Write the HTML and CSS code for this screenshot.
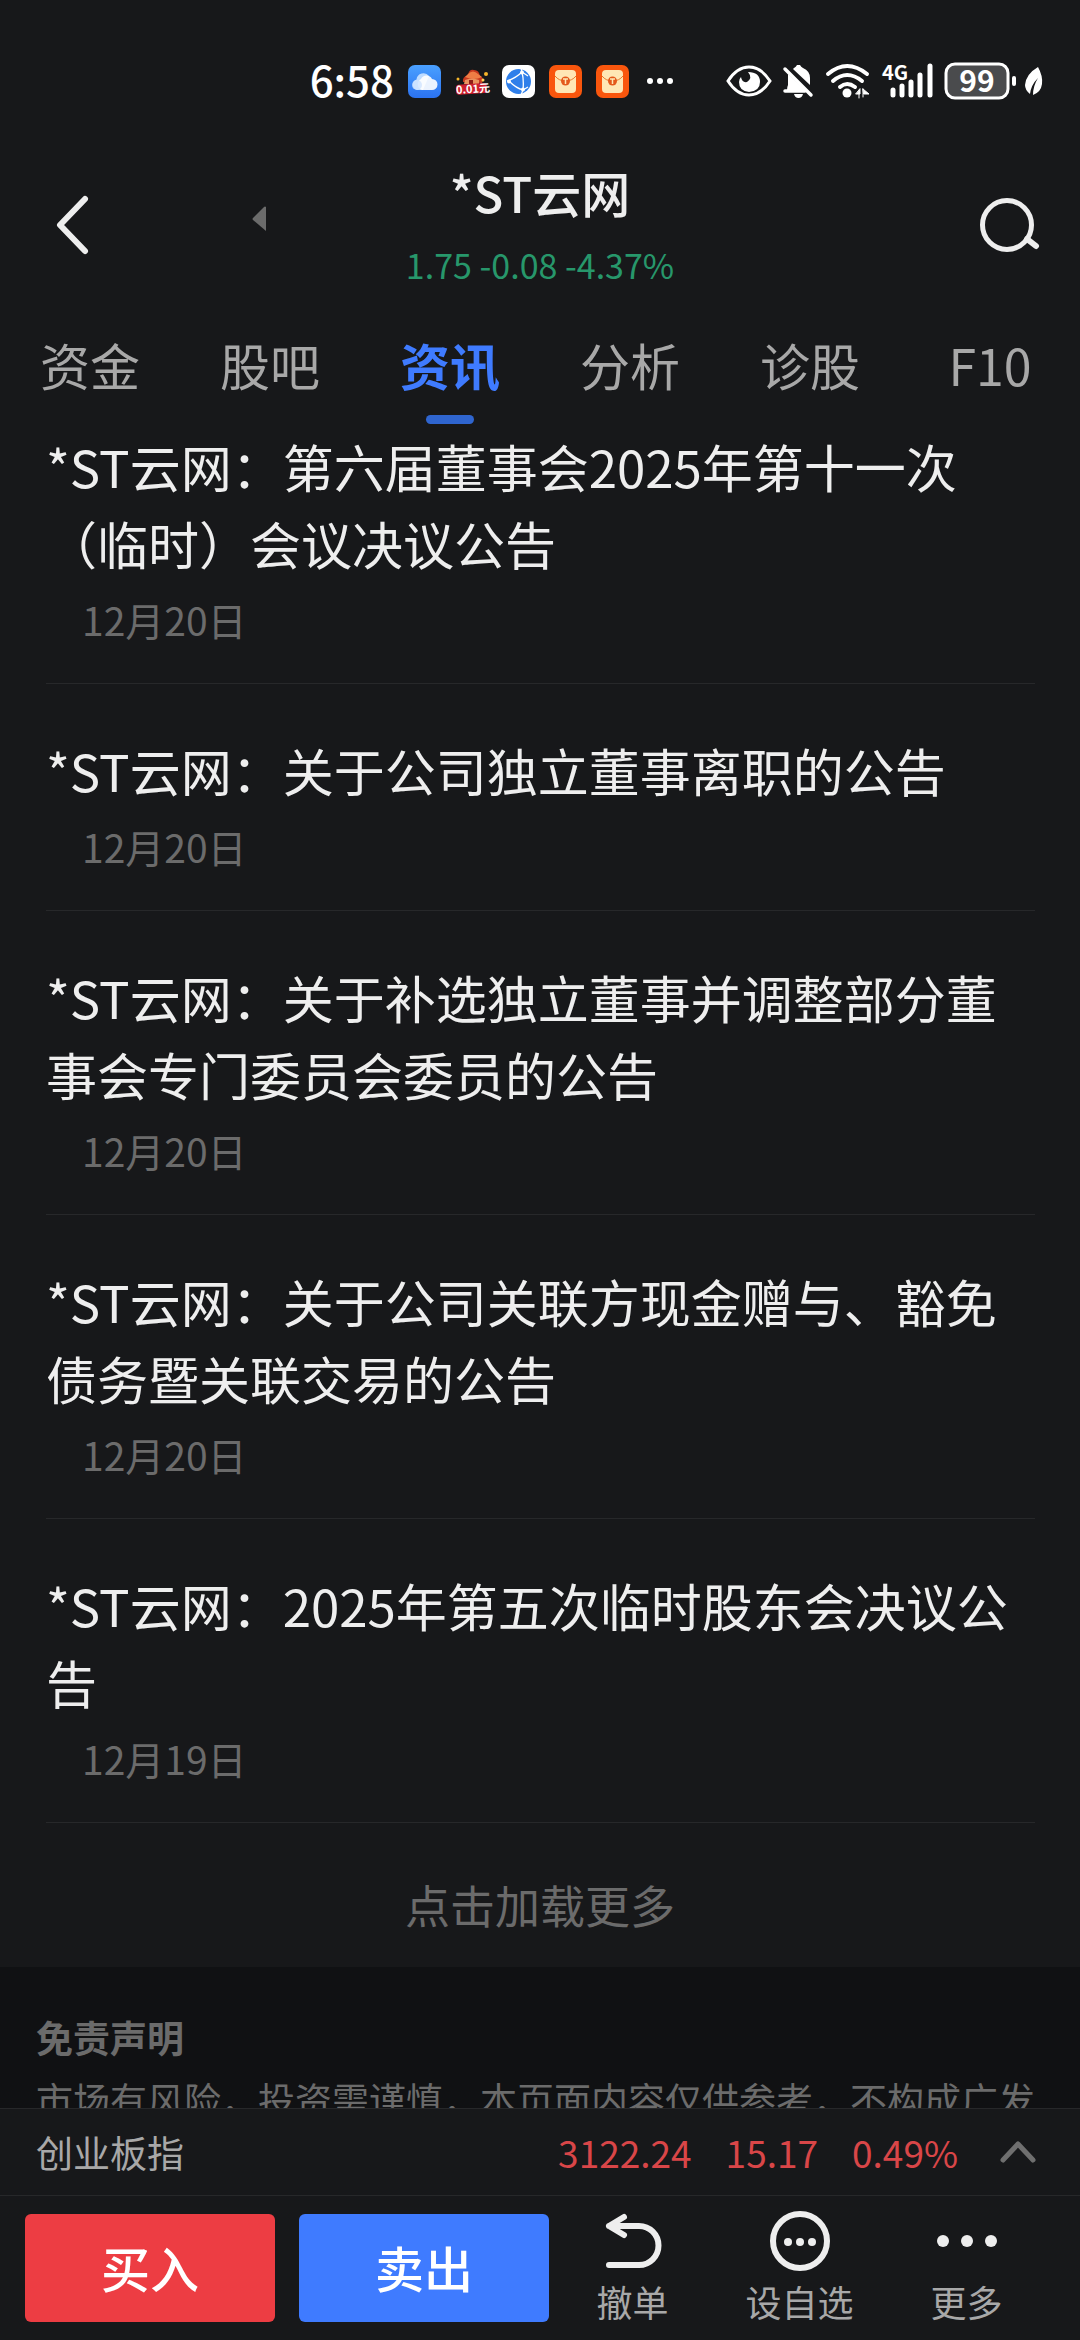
FILE: index.html
```html
<!DOCTYPE html>
<html lang="zh-CN">
<head>
<meta charset="utf-8">
<meta name="viewport" content="width=device-width, initial-scale=1">
<title>*ST云网 资讯</title>
<link rel="stylesheet" href="styles.css">
</head>
<body>
<div class="status">
  <div class="status-group">
    <span class="clock">6:58</span>
    <svg width="33" height="33" viewBox="0 0 33 33"><defs><linearGradient id="sky" x2="0" y2="1"><stop stop-color="#4aa0ff"/><stop offset="1" stop-color="#2b72f0"/></linearGradient></defs><rect width="33" height="33" rx="7" fill="url(#sky)"/><path d="M9 25a5.500 5.500 0 0 1-.5-10.500A7 7 0 0 1 21 11l-6 14z" fill="#bfdcff"/><path d="M14 25a6 6 0 0 1-1-11 6 6 0 0 1 11 0 5.500 5.500 0 0 1 0 11z" fill="#fff" opacity=".9"/><circle cx="9" cy="20" r="5" fill="#cfe4ff" opacity=".8"/></svg>
    <svg width="33" height="33" viewBox="0 0 33 33"><path d="M8 17q-1-5 5-7 1-6 6-5 5 0 6 6 5 2 2 7z" fill="#c8391f"/><path d="M13 9q5-5 10 0l4 3q-8 4-17 0z" fill="#ef7d45"/><path d="M10 15q7-3 14 0v4H9z" fill="#e9925f"/><path d="M14 15h4v4h-4z" fill="#8f1d16"/><circle cx="3" cy="14" r="1.500" fill="#f5b52a"/><circle cx="31" cy="9" r="2" fill="#f5b52a"/><circle cx="28" cy="15" r="1.500" fill="#ffd45c"/><rect x="1" y="19" width="31" height="10" rx="3" fill="#ce1f2e" transform="rotate(-4 16 24)"/><text x="1" y="28" font-size="11" font-weight="700" fill="#fff" transform="rotate(-4 16 24)">0.01元</text></svg>
    <svg width="33" height="33" viewBox="0 0 33 33"><rect width="33" height="33" rx="7" fill="#fff"/><circle cx="16.500" cy="16.500" r="12.500" fill="#2f7fea"/><path d="M5 16Q14 13 20 7q2 8 1 18Q14 23 8 17m12-10 6 4M21 25l5-3M20 7l-1-4M21 25l-2 5" fill="none" stroke="#fff" stroke-width="1.300"/><circle cx="7" cy="16.500" r="2" fill="#fff"/><circle cx="20" cy="7.500" r="2" fill="#fff"/><circle cx="21" cy="24.500" r="2" fill="#fff"/></svg>
    <svg width="33" height="33" viewBox="0 0 33 33"><rect width="33" height="33" rx="7" fill="#f9560d"/><rect x="6" y="5" width="21" height="23" rx="4" fill="#ffe7b5"/><path d="M6 11q4 5 10.500 5T27 11" fill="none" stroke="#e8792c"/><circle cx="16.500" cy="16" r="4.500" fill="#e4591b"/><path d="M14 14h5m-2.500 0v5" stroke="#ffe7b5" stroke-width="1.500"/></svg>
    <svg width="33" height="33" viewBox="0 0 33 33"><rect width="33" height="33" rx="7" fill="#f9560d"/><rect x="6" y="5" width="21" height="23" rx="4" fill="#ffe7b5"/><path d="M6 11q4 5 10.500 5T27 11" fill="none" stroke="#e8792c"/><circle cx="16.500" cy="16" r="4.500" fill="#e4591b"/><path d="M14 14h5m-2.500 0v5" stroke="#ffe7b5" stroke-width="1.500"/></svg>
    <svg width="33" height="33" viewBox="0 0 33 33" fill="#fff"><circle cx="7" cy="16" r="3"/><circle cx="17" cy="16" r="3"/><circle cx="27" cy="16" r="3"/></svg>
  </div>
  <div class="status-group status-system">
    <svg width="46" height="36" viewBox="0 0 46 36"><path d="M2 18Q11 4 23 4t21 14Q35 32 23 32T2 18z" fill="none" stroke="#fff" stroke-width="3"/><path d="M22 9q12 0 12 10 0 9-11 10-10-1-10-10 0-3 2-5 1 6 6 5 6-4 1-10z" fill="#fff"/></svg>
    <svg width="31" height="36" viewBox="0 0 31 36"><path d="M4 27q0-3 1-5V11L22 27zM11 5q2-1 3-3h3q1 2 3 3 7 3 7 10v7L10 6zM11 31h9q-1 4-4.500 4T11 31z" fill="#fff"/><path d="M2 6 28 32M2 28h20" stroke="#fff" stroke-width="3.500" stroke-linecap="round"/></svg>
    <svg width="46" height="36" viewBox="0 0 46 36" fill="none" stroke="#fff" stroke-width="4" stroke-linecap="round"><path d="M3 11Q22-5 42 11M8 18Q22 6 37 18M15 24q7-6 15 0"/><circle cx="22" cy="30" r="4.500" fill="#fff" stroke="none"/><path d="M31 31h4v-5zm3 0v4m4-9v8m0-8 6 5h-5z" fill="#fff" stroke-width="1"/></svg>
    <svg width="51" height="36" viewBox="0 0 51 36"><text class="network" x="0" y="17">4G</text><path d="M11 27v5M20 23v9M29 19v13M38 12v20M48 3v29" stroke="#fff" stroke-width="5" stroke-linecap="round"/></svg>
    <svg width="73" height="38" viewBox="0 0 73 38"><rect x="2" y="2" width="62" height="34" rx="9" fill="#4a4b4d" stroke="#fff" stroke-width="3"/><text class="battery" x="33" y="30" text-anchor="middle">99</text><rect x="68" y="14" width="4" height="10" rx="2" fill="#fff"/></svg>
    <svg class="leaf" width="18" height="30" viewBox="0 0 18 30"><path d="M13 1q5 9 4 17-1 8-9 11 0-9 5-17Q6 19 5 28q-5-4-5-9Q1 8 13 1z" fill="#fff"/></svg>
  </div>
</div>

<header class="header">
  <div class="header-left">
    <button class="icon-button back" aria-label="返回"><svg width="34" height="60" viewBox="0 0 34 60"><path d="M29 4 4 30l25 26" fill="none" stroke="#eee" stroke-width="6" stroke-linecap="round" stroke-linejoin="round"/></svg></button>
    <button class="icon-button" aria-label="上一只"><svg width="16" height="38" viewBox="0 0 16 38"><path d="M14 1v24L1 14q-1-1 0-2L12 1q1-1 2 0z" fill="#6b6b6b"/></svg></button>
  </div>
  <div class="stock">
    <h1 class="stock-name">*ST云网</h1>
    <p class="stock-quote">1.75 -0.08 -4.37%</p>
  </div>
  <button class="icon-button search" aria-label="搜索"><svg width="62" height="56" viewBox="0 0 62 56" fill="none" stroke="#eee" stroke-width="5"><circle cx="29" cy="28" r="24.500"/><path d="m49 42 9 7" stroke-width="6" stroke-linecap="round"/></svg></button>
</header>

<nav class="tabs">
  <a class="tab" href="#fund">资金</a>
  <a class="tab" href="#forum">股吧</a>
  <a class="tab tab-active" href="#news" aria-current="page">资讯</a>
  <a class="tab" href="#analysis">分析</a>
  <a class="tab" href="#diagnosis">诊股</a>
  <a class="tab" href="#f10">F10</a>
</nav>

<main class="content" id="news">
  <ul class="news">
    <li class="news-item"><a class="news-title" href="#n1">*ST云网：第六届董事会2025年第十一次（临时）会议决议公告</a><time class="news-date">12月20日</time></li>
    <li class="news-item"><a class="news-title" href="#n2">*ST云网：关于公司独立董事离职的公告</a><time class="news-date">12月20日</time></li>
    <li class="news-item"><a class="news-title" href="#n3">*ST云网：关于补选独立董事并调整部分董事会专门委员会委员的公告</a><time class="news-date">12月20日</time></li>
    <li class="news-item"><a class="news-title" href="#n4">*ST云网：关于公司关联方现金赠与、豁免债务暨关联交易的公告</a><time class="news-date">12月20日</time></li>
    <li class="news-item"><a class="news-title" href="#n5">*ST云网：2025年第五次临时股东会决议公告</a><time class="news-date">12月19日</time></li>
  </ul>
  <button class="load-more">点击加载更多</button>
  <section class="disclaimer">
    <h2 class="disclaimer-title">免责声明</h2>
    <p class="disclaimer-text">市场有风险，投资需谨慎，本页面内容仅供参考，不构成广发</p>
  </section>
</main>

<footer class="footer">
  <div class="index-bar">
    <span class="index-name">创业板指</span>
    <span class="index-value">3122.24</span>
    <span class="index-value">15.17</span>
    <span class="index-value">0.49%</span>
    <button class="icon-button expand" aria-label="展开"><svg width="36" height="24" viewBox="0 0 36 24"><path d="M3 20 18 4l15 16" fill="none" stroke="#6f6f6f" stroke-width="5" stroke-linecap="round" stroke-linejoin="round"/></svg></button>
  </div>
  <div class="actions">
    <div class="trades">
      <button class="trade buy">买入</button>
      <button class="trade sell">卖出</button>
    </div>
    <div class="tools">
      <button class="tool"><svg width="60" height="60" viewBox="0 0 60 60" fill="none" stroke="#eee" stroke-width="6" stroke-linecap="round" stroke-linejoin="round"><path d="M21 6 6 15l15 9M6 15h30a19.500 19.500 0 0 1 0 39H6"/></svg>撤单</button>
      <button class="tool"><svg width="60" height="60" viewBox="0 0 60 60" fill="#eee"><circle cx="30" cy="30" r="27" fill="none" stroke="#eee" stroke-width="6"/><circle cx="18" cy="31" r="4"/><circle cx="30" cy="31" r="4"/><circle cx="42" cy="31" r="4"/></svg>设自选</button>
      <button class="tool"><svg width="60" height="60" viewBox="0 0 60 60" fill="#eee"><circle cx="6" cy="30" r="6"/><circle cx="30" cy="30" r="6"/><circle cx="54" cy="30" r="6"/></svg>更多</button>
    </div>
  </div>
</footer>
</body>
</html>
```

FILE: styles.css
```css
* {
  box-sizing: border-box;
}

body {
  margin: 0;
  height: 100vh;
  display: flex;
  flex-direction: column;
  overflow: hidden;
  background: #17181a;
  color: #eee;
  font-family: "Noto Sans CJK SC", "Noto Sans", sans-serif;
}

h1, h2, p, ul {
  margin: 0;
  padding: 0;
}

a {
  color: inherit;
  text-decoration: none;
}

button {
  padding: 0;
  border: 0;
  background: none;
  color: inherit;
  font: inherit;
}

svg {
  display: block;
  flex: none;
  overflow: visible;
}

/* Status bar */
.status {
  flex: none;
  display: flex;
  justify-content: flex-end;
  align-items: center;
  gap: 50px;
  height: 112px;
  padding: 50px 37px 0 0;
}

.status-group {
  display: flex;
  align-items: center;
  gap: 14px;
}

.status-system {
  gap: 11px;
}

.clock {
  padding-bottom: 4px;
  color: #fff;
  font-size: 42px;
  font-weight: 500;
  line-height: 60px;
}

.network {
  fill: #fff;
  font-size: 20px;
  font-weight: 700;
}

.battery {
  fill: #fff;
  font-size: 30px;
  font-weight: 700;
}

.leaf {
  margin-left: -3px;
}

/* Header */
.header {
  flex: none;
  display: grid;
  grid-template-columns: 1fr auto 1fr;
  align-items: center;
  height: 226px;
  padding: 0 40px;
}

.header-left {
  display: flex;
  align-items: center;
  gap: 162px;
  padding-left: 16px;
}

.stock {
  display: grid;
  gap: 14px;
  padding-bottom: 4px;
  text-align: center;
}

.stock-name {
  font-size: 49px;
  font-weight: 500;
  line-height: 70px;
}

.stock-quote {
  color: #27976b;
  font-size: 34px;
  line-height: 48px;
}

.search {
  justify-self: end;
}

/* Tabs */
.tabs {
  flex: none;
  display: grid;
  grid-template-columns: repeat(6, 1fr);
  height: 90px;
}

.tab {
  display: flex;
  flex-direction: column;
  align-items: center;
  gap: 25px;
  color: #a8a8a8;
  font-size: 50px;
  line-height: 52px;
}

.tab-active {
  color: #3f7bff;
  font-weight: 700;
}

.tab-active::after {
  content: "";
  width: 48px;
  height: 9px;
  border-radius: 5px;
  background: #2f65cf;
}

/* News list */
.content {
  flex: 1;
  min-height: 0;
  overflow: hidden;
}

.news {
  padding: 0 45px 0 46px;
  list-style: none;
}

.news-item {
  padding: 48px 0 39px;
  border-bottom: 1px solid #27282a;
}

.news-item:first-child {
  padding-top: 0;
}

.news-title {
  display: block;
  font-size: 51px;
  line-height: 77px;
}

.news-date {
  display: block;
  margin-top: 12px;
  padding-left: 36px;
  color: #6b6b6b;
  font-size: 39px;
  line-height: 50px;
}

.load-more {
  display: block;
  width: 100%;
  height: 144px;
  padding-top: 18px;
  color: #6b6b6b;
  font-size: 45px;
}

.disclaimer {
  padding: 45px 36px;
  background: #101113;
  color: #6b6b6b;
  font-size: 37px;
}

.disclaimer-title {
  font-size: 37px;
  font-weight: 700;
  line-height: 50px;
}

.disclaimer-text {
  margin-top: 8px;
  line-height: 58px;
}

/* Bottom bars */
.footer {
  flex: none;
}

.index-bar {
  display: flex;
  align-items: center;
  gap: 34px;
  height: 87px;
  padding: 0 44px 0 36px;
  border-top: 1px solid #27282a;
  font-size: 37px;
}

.index-name {
  margin-right: auto;
  color: #a8a8a8;
}

.index-value {
  color: #d94648;
}

.expand {
  margin-left: 8px;
}

.actions {
  display: flex;
  align-items: center;
  height: 145px;
  padding: 0 30px 0 25px;
  border-top: 1px solid #27282a;
}

.trades {
  flex: 524;
  display: grid;
  grid-template-columns: 1fr 1fr;
  gap: 24px;
}

.trade {
  height: 108px;
  padding-bottom: 4px;
  border-radius: 6px;
  color: #fff;
  font-size: 49px;
  font-weight: 500;
}

.buy {
  background: #ed3d43;
}

.sell {
  background: #3f7bff;
}

.tools {
  flex: 501;
  display: grid;
  grid-template-columns: repeat(3, 1fr);
}

.tool {
  display: grid;
  justify-items: center;
  gap: 10px;
  padding-bottom: 4px;
  color: #a8a8a8;
  font-size: 36px;
  line-height: 40px;
}
```
